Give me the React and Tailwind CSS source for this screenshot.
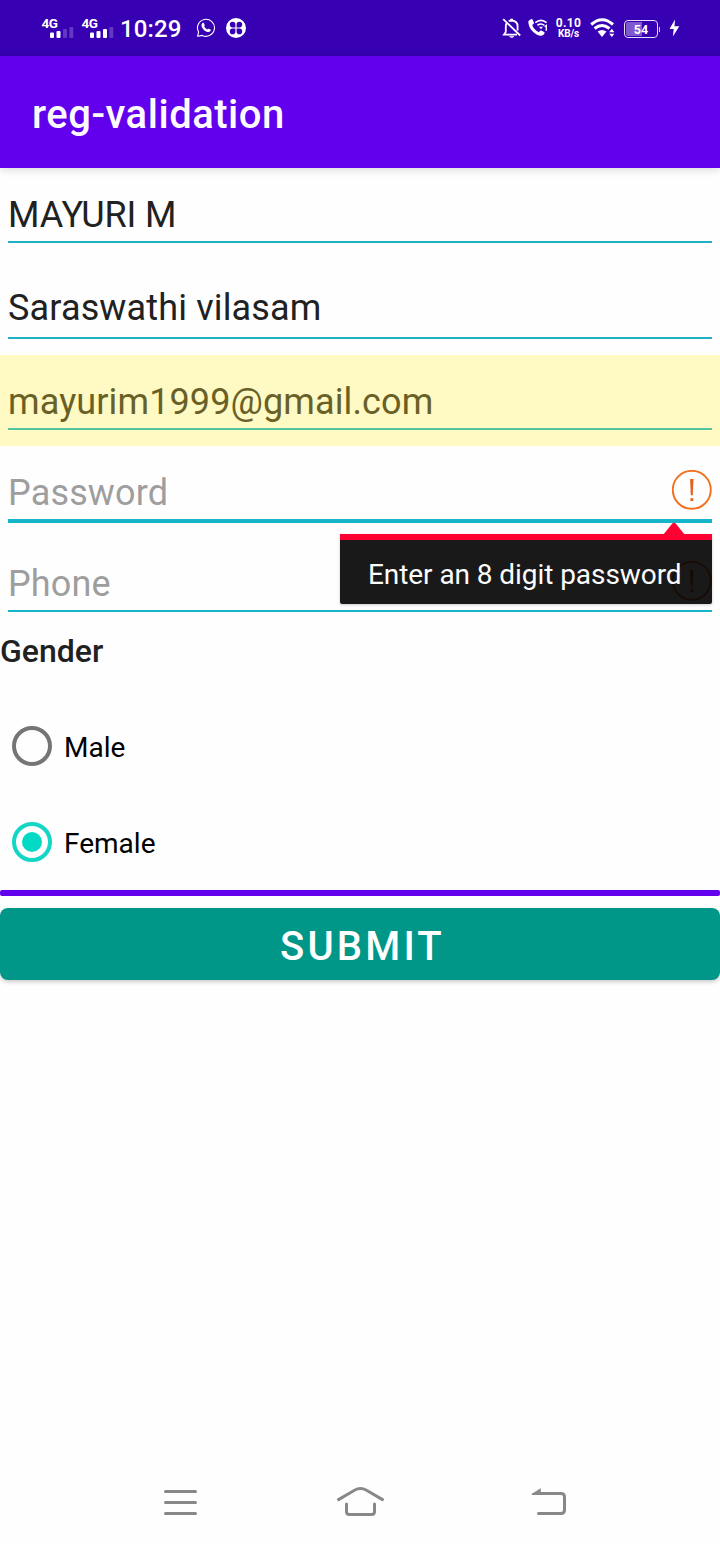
import React from "react";

function ErrorIcon({ className }) {
  return (
    <svg className={className} width="40" height="40" viewBox="0 0 40 40" fill="none">
      <circle cx="19.800" cy="19.800" r="19" stroke="#f0701e" strokeWidth="1.9" />
      <path d="M18.1 9h3.4l-.7 16.300h-2z" fill="#e2631f" />
      <path d="M18.400 28.200h2.900v2.800h-2.900z" fill="#e2631f" />
    </svg>
  );
}

function Signal({ strong }) {
  return (
    <div className="relative h-[28px] w-[32px]">
      <span className="absolute left-[-0.5px] top-[-1px] text-[13.5px] font-bold leading-[14px] tracking-[-0.5px]">4G</span>
      <svg className="absolute left-[8px] top-[9px]" width="24" height="13" viewBox="0 0 24 13" fill="#fff">
        <rect x="0" y="6.500" width="4" height="5.500" rx="1" />
        <rect x="6.500" y="5" width="4" height="7" rx="1" />
        <rect x="13" y="3" width="4" height="9" rx="1" fillOpacity={strong ? 1 : 0.22} />
        <rect x="19.300" y="1" width="4" height="11" rx="1" fillOpacity="0.22" />
      </svg>
    </div>
  );
}

function StatusBar() {
  return (
    <header className="flex h-[56px] items-center bg-[#3700b3] pl-[42px] text-white">
      <div className="flex gap-[8px] pt-[6px]">
        <Signal />
        <Signal strong />
      </div>
      <span className="ml-[6px] w-[63px] whitespace-nowrap text-[24px] font-medium leading-[28px] tracking-[0.1px] pt-[1px]">10:29</span>
      <svg className="ml-[13px]" width="20" height="20" viewBox="0 0 20 20" fill="none">
        <path d="M1.600 18.300l1-4.300A8.500 8.500 0 1 1 6.200 17.400z" stroke="#fff" strokeWidth="1.100" strokeLinejoin="round" />
        <path d="M6.300 5.200c.5-.6 1.300-.6 1.600 0l.8 1.700c.2.500-.2 1-.6 1.400.7 1.500 1.800 2.500 3.300 3.200.5-.5.9-1 1.400-.8l1.700.9c.5.300.3 1.200-.2 1.700-1 1-2.400 1-4.200.1-2-1-3.500-2.600-4.300-4.500-.5-1.500-.3-2.800.5-3.700z" fill="#fff" />
      </svg>
      <svg className="ml-[10px]" width="20" height="20" viewBox="0 0 20 20">
        <circle cx="10" cy="10" r="10" fill="#fff" />
        <path d="M9.400 9.400H6.600A2.800 2.800 0 1 1 9.400 6.600zM10.600 9.400h2.800A2.800 2.800 0 1 0 10.600 6.600zM9.400 10.600H6.600A2.800 2.800 0 1 0 9.400 13.400zM10.600 10.600h2.800A2.800 2.800 0 1 1 10.600 13.400z" fill="#3700b3" />
      </svg>
      <svg className="ml-[256px]" width="20" height="22" viewBox="0 0 20 22" fill="none" stroke="#fff" strokeWidth="1.800">
        <path d="M5 5.500Q3.800 7 3.800 9.500V15L2 17.600H15M6.800 4.300Q8 3.500 9.800 3.500Q15.600 4 15.600 9.500V13.500M1.200 2.200L18.200 18.500" />
        <path d="M7.500 19.500h4.500q-2.200 2.200-4.500 0zM8.600 3.300V2h2.200v1.300" fill="#fff" strokeWidth=".6" />
      </svg>
      <svg className="ml-[6px]" width="20" height="20" viewBox="0 0 20 20" fill="none">
        <path d="M1 2.500L3.300 1c.7-.2 1.100.2 1.400.8l1.200 3c.2.700-.1 1.100-1.700 2.200 1.100 3.200 3 5.400 6.600 7.200 1.200-1.500 1.600-1.900 2.300-1.700l3 1.600c.6.400.7.900.3 1.500-1.200 2-2.800 2.800-5.400 1.900C5.500 15.500 1.500 11 .5 5.500.3 4 .3 3.200 1 2.500z" fill="#fff" />
        <path d="M7.300 4.600Q13 0 18.600 4.600M9.500 7.300Q13 4.700 16.300 7.300" stroke="#fff" strokeWidth="1.700" />
        <path d="M11 8.800h4l-2 2.500z" fill="#fff" />
        <path d="M16.500 8.500l1.800-1v5.300" stroke="#fff" strokeWidth="1.400" />
      </svg>
      <div className="ml-[7px] flex w-[27px] flex-col items-center whitespace-nowrap font-bold">
        <span className="text-[12px] leading-[12px] tracking-[0.3px]">0.10</span>
        <span className="text-[10px] leading-[10px] tracking-[-0.1px]">KB/s</span>
      </div>
      <svg className="ml-[8px]" width="26" height="22" viewBox="0 0 26 22" fill="none">
        <path d="M1.200 7.500Q12.200-2 23 7.500M4.600 11.500Q12 5.500 19.500 11.500" stroke="#fff" strokeWidth="3" />
        <path d="M7.600 14.600Q12 11.400 16.500 14.600L12 20z" fill="#fff" />
        <path d="M19.200 15.200l2.600-3.400 2.600 3.400zM19.200 16.700l2.600 3.400 2.600-3.400z" fill="#fff" />
      </svg>
      <div className="ml-[8px] flex items-center pt-[2px]">
        <div className="relative flex h-[18px] w-[34px] items-center justify-center overflow-hidden rounded-[4px] border-[1.500px] border-[#e5dcf7]">
          <span className="absolute left-[1px] top-[1px] h-[14px] w-[16px] rounded-l-[2px] bg-[#8058cf]" />
          <span className="relative text-[12.5px] font-bold leading-[16px] pt-[2px]">54</span>
        </div>
        <span className="ml-[1px] h-[5px] w-[1px] bg-[#d5c8f1]" />
      </div>
      <svg className="ml-[9px]" width="11" height="18" viewBox="0 0 11 18">
        <path d="M6 .5L.5 10h4.200L3.900 17.500 10.300 7.300H5.500z" fill="#fff" />
      </svg>
    </header>
  );
}

function Field({ className, textClass, lineClass, children }) {
  return (
    <div className={"relative px-[8px] " + className}>
      <div className={"h-[42px] whitespace-nowrap text-[36px] leading-[42px] " + textClass}>{children}</div>
      <div className={lineClass} />
    </div>
  );
}

function Radio({ label, checked }) {
  return (
    <div className="flex h-[96px] items-center pl-[12px] text-black">
      <svg width="40" height="40" viewBox="0 0 40 40" fill="none">
        <circle cx="20" cy="20" r="18" stroke={checked ? "#14d6c5" : "#757575"} strokeWidth="4" />
        {checked && <circle cx="20" cy="20" r="10" fill="#03dac5" />}
      </svg>
      <span className="ml-[12px] pt-[4px] text-[28px] leading-[34px]">{label}</span>
    </div>
  );
}

export default function App() {
  return (
    <div className="flex h-[1544px] w-[720px] flex-col overflow-hidden bg-[#fefefe] font-['Roboto',sans-serif]">
      <StatusBar />
      <div className="relative flex h-[112px] items-center bg-[#6200ee] pl-[32px] pt-[6px] shadow-[0_2px_8px_rgba(0,0,0,0.14)]">
        <h1 className="whitespace-nowrap text-[40px] font-medium leading-[48px] tracking-[0.52px] text-[#fdfaff]">reg-validation</h1>
      </div>
      <Field className="h-[91px] pt-[26px]" textClass="text-[#212121] tracking-[-0.1px]" lineClass="mt-[5px] h-[2px] bg-[#1fb0c2]">MAYURI M</Field>
      <Field className="h-[96px] pt-[28px]" textClass="text-[#212121] tracking-[0.15px]" lineClass="mt-[8px] h-[2px] bg-[#1fb0c2]">Saraswathi vilasam</Field>
      <Field className="h-[91px] bg-[#fff9c4] pt-[26px]" textClass="text-[#686027] tracking-[0.12px]" lineClass="mt-[5px] h-[2px] bg-[#55c39d]">mayurim1999@gmail.com</Field>
      <div className="relative">
        <Field className="h-[91px] pt-[26px]" textClass="text-[#9e9e9e] tracking-[0.15px]" lineClass="mt-[5px] h-[4px] bg-[#15b5c9]">
          Password
          <ErrorIcon className="absolute right-[8px] top-[24px]" />
        </Field>
        <div className="absolute left-[340px] top-[76px] z-10 w-[372px]">
          <svg className="absolute left-[323px] top-0" width="22" height="13" viewBox="0 0 22 13">
            <path d="M0 13L9.500 1.300q1.500-1.200 3 0L22 13z" fill="#ff0033" />
          </svg>
          <div className="mt-[12px] h-[70px] rounded-b-[2px] border-t-[6px] border-[#ff0033] bg-black/90 pl-[28px] pt-[18px] shadow-[0_1px_3px_rgba(0,0,0,0.2)]">
            <span className="block whitespace-nowrap text-[28px] leading-[34px] tracking-[-0.07px] text-[#fcfcfc]">Enter an 8 digit password</span>
          </div>
        </div>
      </div>
      <Field className="h-[91px] pt-[26px]" textClass="text-[#9e9e9e] tracking-[0.15px]" lineClass="mt-[5px] h-[2px] bg-[#15b5c9]">
        Phone
        <ErrorIcon className="absolute right-[8px] top-[24px]" />
      </Field>
      <h2 className="h-[70px] pt-[4px] text-[32px] font-medium leading-[38px] text-[#212121]">Gender</h2>
      <Radio label="Male" />
      <Radio label="Female" checked />
      <div className="h-[6px] rounded-[2px] bg-[#6200ee]" />
      <button className="mt-[12px] h-[72px] w-full rounded-[8px] bg-[#009688] pl-[5px] pt-[6px] text-[40px] font-medium leading-[48px] tracking-[3.17px] text-white shadow-[0_2px_4px_rgba(0,0,0,0.2)]">SUBMIT</button>
      <nav className="mt-auto flex h-[84px] items-start pl-[163px] pt-[26px]">
        <svg width="35" height="32" viewBox="0 0 35 32" stroke="#888" strokeWidth="3" strokeLinecap="round">
          <path d="M2.500 5.500h30M2.500 16.500h30M2.500 27.500h30" />
        </svg>
        <svg className="ml-[138px]" width="50" height="32" viewBox="0 0 50 32" fill="none" stroke="#888" strokeWidth="3" strokeLinecap="round">
          <path d="M2.500 13.600L18.500 4.200Q24.500 1 30.500 4.200L46.500 13.600M10.500 18v7.500q0 3 3 3h22q3 0 3-3V18" />
        </svg>
        <svg className="ml-[144px]" width="38" height="32" viewBox="0 0 38 32" fill="none" stroke="#888" strokeWidth="3" strokeLinecap="round">
          <path d="M7 7.500h24q3.500 0 3.500 3.500v13q0 3.500-3.500 3.500H8.500" />
          <path d="M1.800 8.900v-1.100l9-5.600V9z" fill="#888" stroke="none" />
        </svg>
      </nav>
    </div>
  );
}
